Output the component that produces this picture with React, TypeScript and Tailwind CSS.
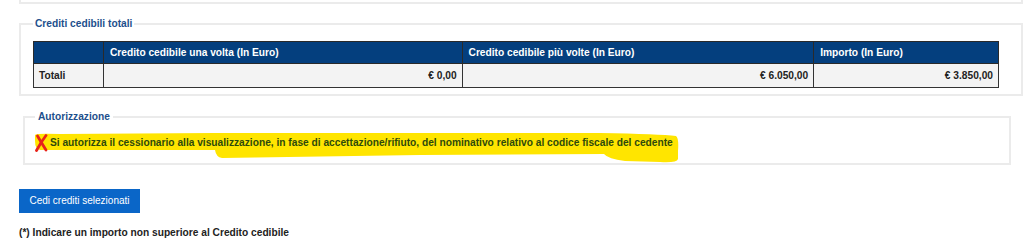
import React from "react";

export default function App() {
  const font = { fontFamily: '"Liberation Sans", Arial, sans-serif' };
  return (
    <div className="relative w-[1030px] h-[252px] bg-white pl-[19px]" style={font}>
      <svg className="absolute left-0 top-0 pointer-events-none" width="1030" height="252">
        <path
          d="M35,135 Q36,133 60,134 L215,133 L420,133 L600,133 Q660,134 676,136 Q679,138 678,151 L678,159 Q677,163 660,162 L625,161 Q608,159 604,154 L420,155 L222,158 Q216,157 215,150 L40,150 Q35,149 35,141 Z"
          fill="#ffe500"
        />
      </svg>

      <div className="relative w-[1004px] h-[4px] border-x-2 border-b-2 border-[#ebebeb]" />

      <fieldset className="relative mt-[13px] w-[1004px] border-2 border-[#ebebeb] pl-[12px] pb-[6px] pt-[10px]">
        <legend className="ml-0 px-[2px] text-[10.2px] leading-[14px] font-bold text-[#1d4f8c]">
          Crediti cedibili totali
        </legend>
        <table className="w-[966px] border-collapse border border-[#333] text-[10.2px] font-bold">
          <colgroup>
            <col className="w-[70px]" />
            <col className="w-[359px]" />
            <col className="w-[352px]" />
            <col className="w-[185px]" />
          </colgroup>
          <thead>
            <tr className="h-[22px] bg-[#043f7e] text-white">
              <th className="border border-[#2a2a2a] px-[6px] text-left font-bold"></th>
              <th className="border border-[#2a2a2a] px-[6px] text-left font-bold">Credito cedibile una volta (In Euro)</th>
              <th className="border border-[#2a2a2a] px-[6px] text-left font-bold">Credito cedibile più volte (In Euro)</th>
              <th className="border border-[#2a2a2a] px-[6px] text-left font-bold">Importo (In Euro)</th>
            </tr>
          </thead>
          <tbody>
            <tr className="h-[24px] bg-[#f3f3f3] text-[#222]">
              <td className="border border-[#333] px-[5px] text-left">Totali</td>
              <td className="border border-[#333] px-[5px] text-right">€ 0,00</td>
              <td className="border border-[#333] px-[5px] text-right">€ 6.050,00</td>
              <td className="border border-[#333] px-[5px] text-right">€ 3.850,00</td>
            </tr>
          </tbody>
        </table>
      </fieldset>

      <fieldset className="relative mt-[14px] ml-[4px] w-[988px] border-2 border-[#ebebeb] pl-[10px] pt-[12px] pb-[13px]">
        <legend className="ml-0 px-[3px] text-[10.2px] leading-[14px] font-bold text-[#1d4f8c]">
          Autorizzazione
        </legend>
        <div className="flex items-center h-[14px]">
          <svg width="13" height="18" viewBox="0 0 13 18" className="mr-[2px] -mt-[1px]">
            <path d="M2.5,2 Q6,8 11,16" stroke="#e8231a" strokeWidth="2.8" fill="none" strokeLinecap="round" />
            <path d="M11,1.5 Q6,8 1.5,16.5" stroke="#e8231a" strokeWidth="2.8" fill="none" strokeLinecap="round" />
          </svg>
          <span className="text-[10.2px] leading-[14px] font-bold text-[#2e4a0c]">
            Si autorizza il cessionario alla visualizzazione, in fase di accettazione/rifiuto, del nominativo relativo al codice fiscale del cedente
          </span>
        </div>
      </fieldset>

      <button className="relative mt-[24px] h-[24px] w-[121px] bg-[#0a66c8] text-white text-[10px] leading-[24px] text-center">
        Cedi crediti selezionati
      </button>

      <div className="relative mt-[13px] text-[10.2px] leading-[14px] font-bold text-[#222]">
        (*) Indicare un importo non superiore al Credito cedibile
      </div>
    </div>
  );
}
